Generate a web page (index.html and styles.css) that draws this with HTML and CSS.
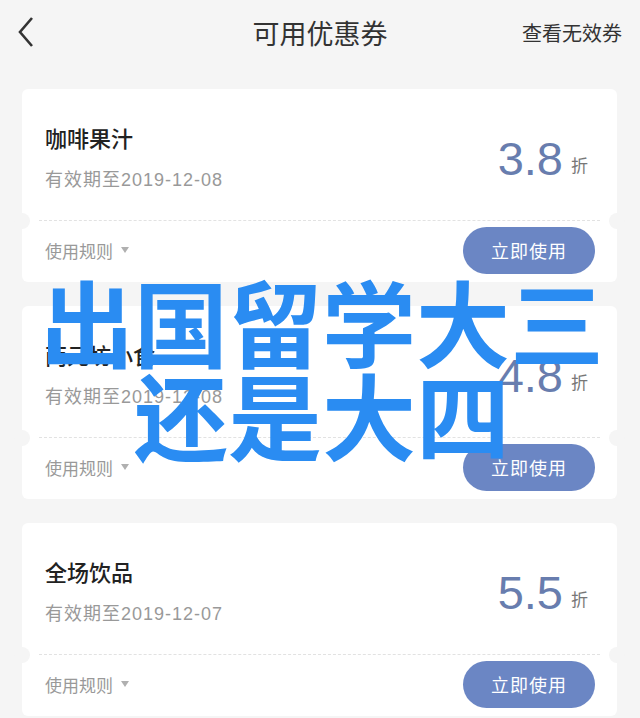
FILE: index.html
```html
<!DOCTYPE html>
<html lang="zh-CN">
<head>
    <meta charset="UTF-8">
    <meta name="viewport" content="width=device-width, initial-scale=1.0">
    <title>可用优惠券</title>
    <link rel="stylesheet" href="styles.css">
</head>
<body>
    <header class="nav">
        <span class="nav-back">
            <svg width="20" height="32" viewBox="0 0 20 32"><path d="M15 2 L3 16 L15 30" fill="none" stroke="#333" stroke-width="2.6"/></svg>
        </span>
        <h1 class="nav-title">可用优惠券</h1>
        <span class="nav-link">查看无效券</span>
    </header>

    <main class="list">
        <div class="coupon">
            <div class="coupon-top">
                <div class="coupon-info">
                    <div class="coupon-name">咖啡果汁</div>
                    <div class="coupon-date">有效期至2019-12-08</div>
                </div>
                <div class="coupon-price">3.8<span class="unit">折</span></div>
            </div>
            <div class="divider"></div>
            <div class="coupon-bottom">
                <span class="rules">使用规则 <i class="arrow"></i></span>
                <button class="use-btn">立即使用</button>
            </div>
        </div>

        <div class="coupon">
            <div class="coupon-top">
                <div class="coupon-info">
                    <div class="coupon-name">两元坊小食</div>
                    <div class="coupon-date">有效期至2019-12-08</div>
                </div>
                <div class="coupon-price">4.8<span class="unit">折</span></div>
            </div>
            <div class="divider"></div>
            <div class="coupon-bottom">
                <span class="rules">使用规则 <i class="arrow"></i></span>
                <button class="use-btn">立即使用</button>
            </div>
        </div>

        <div class="coupon">
            <div class="coupon-top">
                <div class="coupon-info">
                    <div class="coupon-name">全场饮品</div>
                    <div class="coupon-date">有效期至2019-12-07</div>
                </div>
                <div class="coupon-price">5.5<span class="unit">折</span></div>
            </div>
            <div class="divider"></div>
            <div class="coupon-bottom">
                <span class="rules">使用规则 <i class="arrow"></i></span>
                <button class="use-btn">立即使用</button>
            </div>
        </div>
    </main>

    <div class="overlay">出国留学大三<br>还是大四</div>
</body>
</html>
```

FILE: styles.css
```css
body {
    background-color: #f5f5f5;
    font-family: "Liberation Sans", "Noto Sans CJK SC", sans-serif;
    margin: 0;
    padding: 0;
    height: 718px;
    overflow: hidden;
    position: relative;
}

.nav {
    height: 64px;
    display: flex;
    align-items: center;
    justify-content: space-between;
    padding: 0 18px 0 17px;
    position: relative;
}

.nav-back {
    display: flex;
    width: 20px;
}

.nav-title {
    position: absolute;
    left: 0;
    right: 0;
    margin: 0;
    text-align: center;
    font-size: 27px;
    font-weight: normal;
    color: #333;
    pointer-events: none;
}

.nav-link {
    font-size: 20px;
    color: #333;
}

.list {
    padding: 25px 23px 0 22px;
    display: flex;
    flex-direction: column;
    gap: 24px;
}

.coupon {
    background-color: #fff;
    border-radius: 6px;
    height: 193px;
    display: flex;
    flex-direction: column;
}

.coupon-top {
    height: 131px;
    display: flex;
    align-items: center;
    justify-content: space-between;
    padding: 8px 29px 0 23px;
    box-sizing: border-box;
}

.coupon-name {
    font-size: 22px;
    font-weight: 500;
    color: #222;
    line-height: 26px;
}

.coupon-date {
    font-size: 18px;
    letter-spacing: 1px;
    color: #999;
    margin-top: 16px;
    line-height: 22px;
}

.coupon-price {
    font-size: 47px;
    color: #687dae;
    line-height: 1;
    display: flex;
    align-items: baseline;
}

.coupon-price .unit {
    font-size: 17px;
    color: #777;
    margin-left: 8px;
    position: relative;
    top: -3px;
}

.divider {
    position: relative;
    margin: 0 17px;
    border-top: 1px dashed #e2e2e2;
}

.divider::before,
.divider::after {
    content: "";
    position: absolute;
    top: -8px;
    width: 16px;
    height: 16px;
    border-radius: 50%;
    background-color: #f5f5f5;
}

.divider::before {
    left: -25px;
}

.divider::after {
    right: -25px;
}

.coupon-bottom {
    flex: 1;
    display: flex;
    align-items: center;
    justify-content: space-between;
    padding: 0 22px 3px 23px;
}

.rules {
    font-size: 17px;
    color: #999;
    display: flex;
    align-items: center;
    gap: 8px;
}

.arrow {
    width: 0;
    height: 0;
    border-left: 4px solid transparent;
    border-right: 4px solid transparent;
    border-top: 6px solid #b0b0b0;
}

.use-btn {
    width: 132px;
    height: 47px;
    border: none;
    border-radius: 24px;
    background-color: #6b86c4;
    color: #fff;
    font-family: "Noto Sans CJK SC", sans-serif;
    font-size: 18px;
    letter-spacing: 1px;
    padding: 0;
}

.overlay {
    position: absolute;
    top: 274px;
    left: 0;
    right: 0;
    text-align: center;
    padding-left: 4px;
    font-family: "Noto Sans CJK SC", sans-serif;
    font-weight: 700;
    font-size: 94px;
    line-height: 93px;
    color: #2a8cf2;
}
```
